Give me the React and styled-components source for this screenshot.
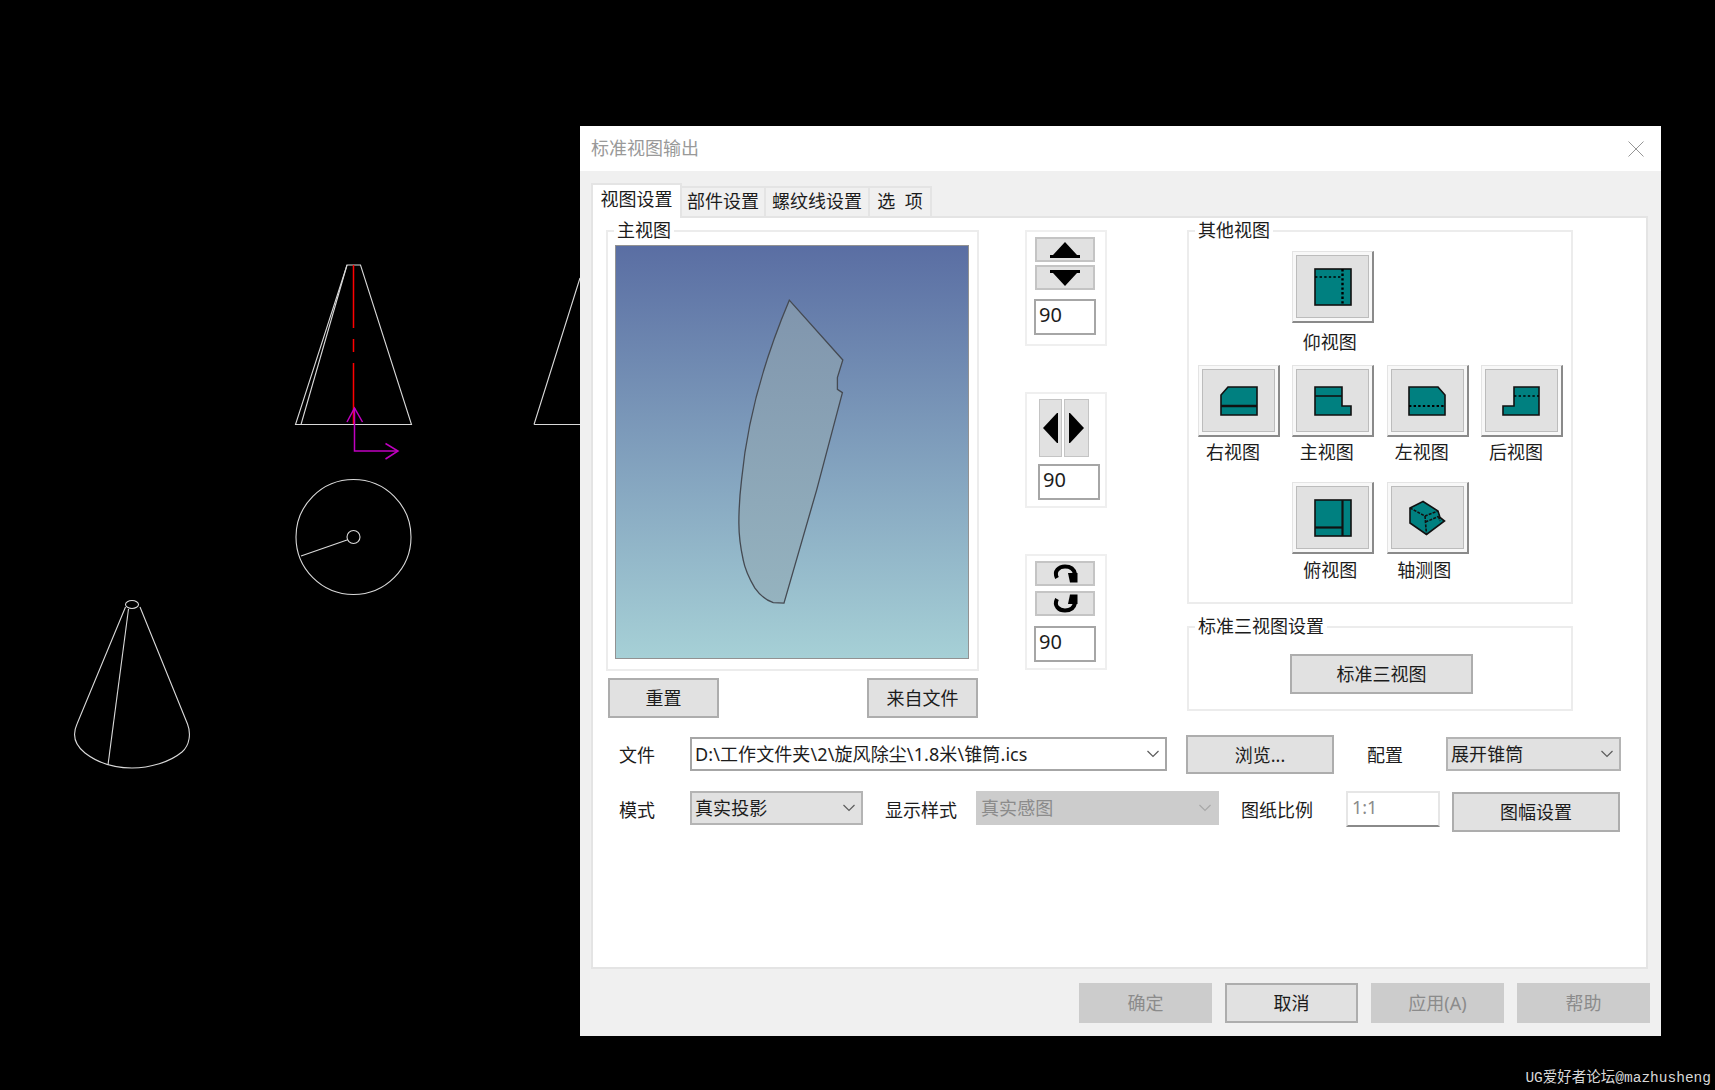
import styled, { createGlobalStyle } from "styled-components";

const GlobalStyle = createGlobalStyle`
  html, body {
    margin: 0;
    background: #000;
    overflow: hidden;
  }
  * {
    box-sizing: border-box;
  }
`;

const Stage = styled.div`
  position: relative;
  width: 1715px;
  height: 1090px;
  background: #000;
  overflow: hidden;
  font: 18px "Noto Sans", "Noto Sans CJK SC", sans-serif;
  color: #1c1c1c;
`;

const CadCanvas = styled.svg`
  position: absolute;
  inset: 0;
`;

const Dialog = styled.div`
  position: absolute;
  left: 580px;
  top: 126px;
  width: 1081px;
  height: 910px;
  background: #f0f0f0;
  display: flex;
  flex-direction: column;
`;

const TitleBar = styled.div`
  height: 45px;
  flex: none;
  background: #fff;
  display: flex;
  align-items: center;
  justify-content: space-between;
  padding: 0 17px 0 11px;
  color: #999;
  line-height: 45px;
`;

const TabStrip = styled.div`
  height: 33px;
  margin: 12px 0 0 11px;
  flex: none;
  display: flex;
  align-items: flex-end;
`;

const Tab = styled.div`
  position: relative;
  z-index: 1;
  width: ${({ $w }) => $w}px;
  height: ${({ $active }) => ($active ? 35 : 30)}px;
  margin-bottom: ${({ $active }) => ($active ? -2 : 0)}px;
  background: ${({ $active }) => ($active ? "#fff" : "#f0f0f0")};
  border: 2px solid #e4e4e4;
  border-width: ${({ $active }) => ($active ? "2px 2px 0 2px" : "2px 2px 0 0")};
  text-align: center;
  line-height: ${({ $active }) => ($active ? 28 : 27)}px;
  word-spacing: 5px;
  white-space: nowrap;
`;

const Pane = styled.div`
  width: 1057px;
  height: 753px;
  margin-left: 11px;
  flex: none;
  background: #fff;
  border: 2px solid #e4e4e4;
  padding: 12px 0 0 13px;
`;

const TopArea = styled.div`
  display: flex;
  align-items: flex-start;
`;

const LeftColumn = styled.div`
  width: 373px;
  margin-right: 46px;
`;

const GroupBox = styled.div`
  position: relative;
  border: 2px solid #ececec;
  height: ${({ $h }) => $h}px;
  padding: ${({ $pad }) => $pad};
`;

const GroupTitle = styled.span`
  position: absolute;
  top: -14px;
  left: 6px;
  padding: 0 3px;
  background: #fff;
  line-height: 24px;
  white-space: nowrap;
`;

const Preview = styled.div`
  width: 354px;
  height: 414px;
  border: 1.5px solid #929292;
  background: linear-gradient(180deg, #5a6ea3 0%, #a6d0d6 100%);
`;

const PreviewDrawing = styled.svg`
  display: block;
  width: 100%;
  height: 100%;
`;

const ButtonRow = styled.div`
  display: flex;
  justify-content: space-between;
  margin-top: 7px;
  padding: 0 1px 0 2px;
`;

const Button = styled.div`
  width: ${({ $w }) => $w}px;
  height: ${({ $h }) => $h || 40}px;
  margin-top: ${({ $mt }) => $mt || 0}px;
  margin-left: ${({ $ml }) => $ml || 0}px;
  flex: none;
  display: flex;
  align-items: center;
  justify-content: center;
  background: ${({ $disabled }) => ($disabled ? "#cccccc" : "#e1e1e1")};
  border: 2px solid ${({ $disabled }) => ($disabled ? "#cccccc" : "#adadad")};
  color: ${({ $disabled }) => ($disabled ? "#8b8b8b" : "#1c1c1c")};
  line-height: 24px;
  white-space: nowrap;
`;

const SpinColumn = styled.div`
  width: 82px;
  margin-right: 80px;
  display: flex;
  flex-direction: column;
  gap: 46px;
`;

const SpinBox = styled.div`
  height: 116px;
  border: 2px solid #efefef;
  padding: 5px 0 0 ${({ $pl }) => $pl}px;
`;

const StepStack = styled.div`
  display: flex;
  flex-direction: column;
  gap: ${({ $gap }) => $gap}px;
  margin-left: 1px;
`;

const StepPair = styled.div`
  display: flex;
  gap: 2px;
  margin-left: 1px;
`;

const StepButton = styled.div`
  width: ${({ $w }) => $w}px;
  height: ${({ $h }) => $h}px;
  display: flex;
  align-items: center;
  justify-content: center;
  background: #e1e1e1;
  border: 2px solid #c4c4c4;
  border-width: ${({ $flat }) => ($flat ? "1px" : "2px")};
`;

const NumberField = styled.div`
  width: 62px;
  height: 36px;
  margin-top: ${({ $mt }) => $mt}px;
  border: 2px solid #a6a6a6;
  background: #fff;
  padding-left: 3px;
  font-size: 20px;
  line-height: 28px;
`;

const RightColumn = styled.div`
  width: 386px;
  display: flex;
  flex-direction: column;
  gap: 22px;
`;

const IconGrid = styled.div`
  display: grid;
  grid-template-columns: repeat(4, 82px);
  grid-template-rows: 114px 117px 80px;
  column-gap: 12.33px;
`;

const IconCell = styled.div`
  grid-column: ${({ $col }) => $col};
  grid-row: ${({ $row }) => $row};
  display: flex;
  flex-direction: column;
  align-items: center;
`;

const IconButton = styled.div`
  width: 82px;
  height: 72px;
  flex: none;
  display: flex;
  align-items: center;
  justify-content: center;
  background: #e1e1e1;
  border-style: solid;
  border-width: 1px 2px 2px 1px;
  border-color: #e4e4e4 #8a8a8a #8a8a8a #e4e4e4;
  box-shadow: inset 0 0 0 3px #f8f8f8, inset 0 0 0 4px #bcbcbc;
`;

const IconLabel = styled.span`
  margin-top: ${({ $mt }) => $mt}px;
  margin-right: ${({ $shift }) => $shift}px;
  line-height: 24px;
  white-space: nowrap;
`;

const FormRow = styled.div`
  display: flex;
  align-items: flex-start;
  margin-top: ${({ $mt }) => $mt}px;
  padding-left: 13px;
`;

const FieldLabel = styled.span`
  width: ${({ $w }) => $w}px;
  margin-left: ${({ $ml }) => $ml || 0}px;
  flex: none;
  line-height: ${({ $lh }) => $lh}px;
  white-space: nowrap;
`;

const Combo = styled.div`
  width: ${({ $w }) => $w}px;
  height: 34px;
  margin-top: ${({ $mt }) => $mt || 0}px;
  flex: none;
  display: flex;
  align-items: center;
  justify-content: space-between;
  padding: 0 5px 0 3px;
  background: ${({ $tone }) =>
    $tone === "white" ? "#fff" : $tone === "off" ? "#cccccc" : "#e1e1e1"};
  border: 2px solid
    ${({ $tone }) =>
      $tone === "white" ? "#a6a6a6" : $tone === "off" ? "#cccccc" : "#b4b4b4"};
  color: ${({ $tone }) => ($tone === "off" ? "#8b8b8b" : "#1c1c1c")};
  line-height: 28px;
  letter-spacing: 0.1px;
  white-space: nowrap;
`;

const ScaleField = styled.div`
  width: 94px;
  height: 36px;
  flex: none;
  background: #fff;
  border: 2px solid #e6e6e6;
  border-bottom-color: #8a8a8a;
  color: #8b8b8b;
  padding-left: 4px;
  line-height: 28px;
`;

const Footer = styled.div`
  display: flex;
  justify-content: flex-end;
  gap: 13px;
  margin-top: 14px;
  padding-right: 11px;
`;

const Watermark = styled.div`
  position: absolute;
  right: 4px;
  bottom: 2px;
  font: 14.5px "Liberation Mono", "Noto Sans CJK SC", monospace;
  line-height: 20px;
  color: #d8d8d8;
  white-space: nowrap;
`;

const TEAL = "#008080";

const Flat = ({ w, h, children }) => (
  <svg width={w} height={h} viewBox={`0 0 ${w} ${h}`}>
    <g fill={TEAL} stroke="#111" strokeWidth="1.6">
      {children}
    </g>
  </svg>
);

const Dotted = (props) => (
  <line stroke="#000" strokeDasharray="2.4 2.2" fill="none" {...props} />
);

const BottomIcon = () => (
  <Flat w={38} h={38}>
    <rect x="1" y="1" width="36" height="36" />
    <Dotted x1="1" y1="9" x2="28" y2="9" strokeWidth="1.5" />
    <Dotted x1="28.5" y1="1" x2="28.5" y2="37" strokeWidth="2.4" />
  </Flat>
);

const RightIcon = () => (
  <Flat w={38} h={30}>
    <path d="M8 1H37V29H1V9Z" />
    <line x1="1" y1="20" x2="37" y2="20" strokeWidth="2.4" />
  </Flat>
);

const FrontIcon = () => (
  <Flat w={38} h={30}>
    <path d="M1 1H28V20H37V29H1Z" />
    <line x1="1" y1="10" x2="28" y2="10" />
  </Flat>
);

const LeftIcon = () => (
  <Flat w={38} h={30}>
    <path d="M1 1H30L37 9V29H1Z" />
    <Dotted x1="1" y1="20" x2="37" y2="20" strokeWidth="2.2" />
  </Flat>
);

const BackIcon = () => (
  <Flat w={38} h={30}>
    <path d="M12 1H37V29H1V20H12Z" />
    <Dotted x1="12" y1="10" x2="37" y2="10" strokeWidth="1.4" />
  </Flat>
);

const TopIcon = () => (
  <Flat w={38} h={38}>
    <rect x="1" y="1" width="36" height="36" />
    <line x1="28.5" y1="1" x2="28.5" y2="37" strokeWidth="2.2" />
    <line x1="1" y1="28.5" x2="28.5" y2="28.5" strokeWidth="2.2" />
  </Flat>
);

const IsoIcon = () => (
  <Flat w={37} h={36}>
    <path d="M14 1.5L1 8V23L17.5 34.5L35.5 21L31 17.5L29 11Z" />
    <path d="M1 8L16 16L29 11M16 16L17.5 34.5M16.5 22L29.5 16.5M29.5 16.5L31 21" fill="none" strokeDasharray="3 1.2" />
  </Flat>
);

const TriangleUp = () => (
  <svg width="30" height="16" viewBox="0 0 30 16">
    <path d="M15 0L27 13H30V16H0V13H3Z" fill="#000" />
  </svg>
);

const TriangleDown = () => (
  <svg width="30" height="16" viewBox="0 0 30 16">
    <path d="M15 16L3 3H0V0H30V3H27Z" fill="#000" />
  </svg>
);

const TriangleLeft = () => (
  <svg width="15" height="30" viewBox="0 0 15 30">
    <path d="M0 15L14 0H15V30H14Z" fill="#000" />
  </svg>
);

const TriangleRight = () => (
  <svg width="15" height="30" viewBox="0 0 15 30">
    <path d="M15 15L1 0H0V30H1Z" fill="#000" />
  </svg>
);

const RotateIcon = ({ flip }) => (
  <svg width="26" height="19" viewBox="0 0 26 19">
    <g transform={flip ? "matrix(1 0 0 -1 0 19)" : undefined}>
      <path d="M5 14C1.5 7 7 2.5 13 2.5C18 2.5 22 5 23 10" fill="none" stroke="#000" strokeWidth="4" />
      <path d="M16 9H25.5V18.5H18Z" fill="#000" />
    </g>
  </svg>
);

const Chevron = ({ color = "#5c5c5c" }) => (
  <svg width="14" height="8" viewBox="0 0 14 8">
    <path d="M1.5 1L7 6.5L12.5 1" fill="none" stroke={color} strokeWidth="1.2" />
  </svg>
);

const CloseIcon = () => (
  <svg width="16" height="16" viewBox="0 0 16 16">
    <path d="M0.5 0.5L15.5 15.5M15.5 0.5L0.5 15.5" stroke="#969696" strokeWidth="1" />
  </svg>
);

const CadDrawing = () => (
  <CadCanvas width="1715" height="1090" viewBox="0 0 1715 1090">
    <g fill="none" stroke="#d9d9d9" strokeWidth="1.1">
      <path d="M347 265H360.5L411.5 424.5H295.5Z" />
      <path d="M347 265L301 424.5" />
      <path d="M534 424.5H580M534 424.5L580 278" />
      <circle cx="353.5" cy="537" r="57.5" />
      <circle cx="353.5" cy="537" r="6.5" />
      <path d="M301 556L347 540" />
      <ellipse cx="132" cy="604.5" rx="6.5" ry="4" />
      <path d="M125.5 607L77 724C72 735 75 745 85 753C98 763 115 768 132 768C150 768 170 762 182 752C190 745 191 733 187.5 724L140 607" />
      <path d="M128.5 609L108 765" />
    </g>
    <g fill="none" stroke="#ff0000" strokeWidth="1.5">
      <path d="M353.5 265V328M353.5 339V352M353.5 363V424" />
    </g>
    <g fill="none" stroke="#c000c0" strokeWidth="1.5">
      <path d="M354.5 408V451H398" />
      <path d="M347 422L354.5 408L362.5 422" />
      <path d="M385.5 443.5L398 451L385.5 459" />
    </g>
  </CadCanvas>
);

const viewIcons = [
  { col: 2, row: 1, label: "仰视图", icon: <BottomIcon />, mt: 7, shift: 7 },
  { col: 1, row: 2, label: "右视图", icon: <RightIcon />, mt: 3, shift: 12 },
  { col: 2, row: 2, label: "主视图", icon: <FrontIcon />, mt: 3, shift: 13 },
  { col: 3, row: 2, label: "左视图", icon: <LeftIcon />, mt: 3, shift: 12 },
  { col: 4, row: 2, label: "后视图", icon: <BackIcon />, mt: 3, shift: 12 },
  { col: 2, row: 3, label: "俯视图", icon: <TopIcon />, mt: 4, shift: 6 },
  { col: 3, row: 3, label: "轴测图", icon: <IsoIcon />, mt: 4, shift: 7 },
];

const tabs = [
  { label: "视图设置", w: 91, active: true },
  { label: "部件设置", w: 84 },
  { label: "螺纹线设置", w: 104 },
  { label: "选 项", w: 62 },
];

const App = () => {
  return (
    <Stage>
      <GlobalStyle />
      <CadDrawing />
      <Dialog>
        <TitleBar>
          <span>标准视图输出</span>
          <CloseIcon />
        </TitleBar>
        <TabStrip>
          {tabs.map((tab) => (
            <Tab key={tab.label} $w={tab.w} $active={tab.active}>
              {tab.label}
            </Tab>
          ))}
        </TabStrip>
        <Pane>
          <TopArea>
            <LeftColumn>
              <GroupBox $h={441} $pad="13px 0 0 7px">
                <GroupTitle>主视图</GroupTitle>
                <Preview>
                  <PreviewDrawing viewBox="617 247 350 411">
                    <defs>
                      <linearGradient id="sheet" x1="0" y1="0" x2="0" y2="1">
                        <stop offset="0" stopColor="#8095ad" />
                        <stop offset="1" stopColor="#95b3bf" />
                      </linearGradient>
                    </defs>
                    <path
                      d="M789.3 301L842.7 360.7L837.3 378.3V390L842.3 393.3L816.7 490L784 603.3L773.3 602.7C765 600 759 594 755 588.3C749 578 745 569 743.3 560C740 545 739 535 739 523.3C739 508 740 494 741.7 480C746 435 758 375 789.3 301Z"
                      fill="url(#sheet)"
                      stroke="#454a52"
                      strokeWidth="1.3"
                    />
                  </PreviewDrawing>
                </Preview>
              </GroupBox>
              <ButtonRow>
                <Button $w={111}>重置</Button>
                <Button $w={111}>来自文件</Button>
              </ButtonRow>
            </LeftColumn>

            <SpinColumn>
              <SpinBox $pl={7}>
                <StepStack $gap={3}>
                  <StepButton $w={60} $h={25}>
                    <TriangleUp />
                  </StepButton>
                  <StepButton $w={60} $h={25}>
                    <TriangleDown />
                  </StepButton>
                </StepStack>
                <NumberField $mt={9}>90</NumberField>
              </SpinBox>
              <SpinBox $pl={11}>
                <StepPair>
                  <StepButton $w={23} $h={58} $flat>
                    <TriangleLeft />
                  </StepButton>
                  <StepButton $w={25} $h={58} $flat>
                    <TriangleRight />
                  </StepButton>
                </StepPair>
                <NumberField $mt={7}>90</NumberField>
              </SpinBox>
              <SpinBox $pl={7}>
                <StepStack $gap={5}>
                  <StepButton $w={60} $h={25}>
                    <RotateIcon />
                  </StepButton>
                  <StepButton $w={60} $h={25}>
                    <RotateIcon flip />
                  </StepButton>
                </StepStack>
                <NumberField $mt={10}>90</NumberField>
              </SpinBox>
            </SpinColumn>

            <RightColumn>
              <GroupBox $h={374} $pad="19px 0 0 9px">
                <GroupTitle>其他视图</GroupTitle>
                <IconGrid>
                  {viewIcons.map((item) => (
                    <IconCell key={item.label} $col={item.col} $row={item.row}>
                      <IconButton>{item.icon}</IconButton>
                      <IconLabel $mt={item.mt} $shift={item.shift}>
                        {item.label}
                      </IconLabel>
                    </IconCell>
                  ))}
                </IconGrid>
              </GroupBox>
              <GroupBox $h={85} $pad="26px 0 0 101px">
                <GroupTitle>标准三视图设置</GroupTitle>
                <Button $w={183}>标准三视图</Button>
              </GroupBox>
            </RightColumn>
          </TopArea>

          <FormRow $mt={17}>
            <FieldLabel $w={71} $lh={40}>文件</FieldLabel>
            <Combo $w={477} $mt={2} $tone="white">
              <span>D:\工作文件夹\2\旋风除尘\1.8米\锥筒.ics</span>
              <Chevron />
            </Combo>
            <Button $w={148} $h={39} $ml={19}>浏览...</Button>
            <FieldLabel $w={79} $ml={33} $lh={40}>配置</FieldLabel>
            <Combo $w={175} $mt={2}>
              <span>展开锥筒</span>
              <Chevron />
            </Combo>
          </FormRow>

          <FormRow $mt={16}>
            <FieldLabel $w={71} $lh={38}>模式</FieldLabel>
            <Combo $w={173}>
              <span>真实投影</span>
              <Chevron />
            </Combo>
            <FieldLabel $w={91} $ml={22} $lh={38}>显示样式</FieldLabel>
            <Combo $w={243} $tone="off">
              <span>真实感图</span>
              <Chevron color="#a8a8a8" />
            </Combo>
            <FieldLabel $w={105} $ml={22} $lh={38}>图纸比例</FieldLabel>
            <ScaleField>1:1</ScaleField>
            <Button $w={168} $mt={1} $ml={12}>图幅设置</Button>
          </FormRow>
        </Pane>
        <Footer>
          <Button $w={133} $disabled>确定</Button>
          <Button $w={133}>取消</Button>
          <Button $w={133} $disabled>应用(A)</Button>
          <Button $w={133} $disabled>帮助</Button>
        </Footer>
      </Dialog>
      <Watermark>UG爱好者论坛@mazhusheng</Watermark>
    </Stage>
  );
};

export default App;
